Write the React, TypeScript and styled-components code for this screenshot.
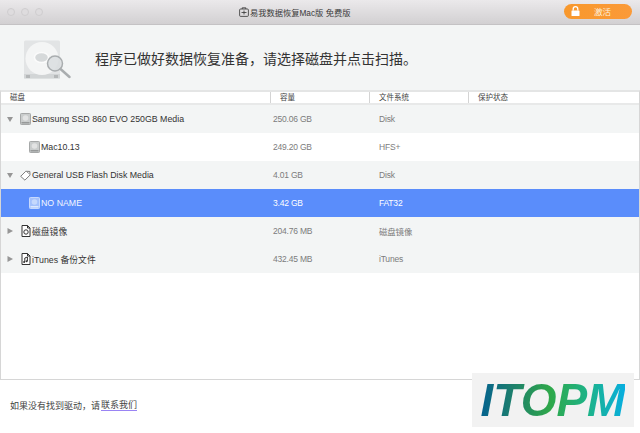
import { FC, ReactNode } from "react";
import styled, { createGlobalStyle } from "styled-components";

const GlobalStyle = createGlobalStyle`
	html, body {
		margin: 0;
		padding: 0;
		background: #ffffff;
	}
	body {
		font-family: "Liberation Sans", "Noto Sans CJK SC", sans-serif;
		color: #333333;
	}
`;

const Page = styled.div`
	position: relative;
	width: 640px;
	height: 433px;
	display: flex;
	flex-direction: column;
	overflow: hidden;
	background: #ffffff;
`;

const TitleBar = styled.div`
	height: 25px;
	flex: none;
	display: flex;
	align-items: center;
	padding: 0 8px 0 7px;
	background: linear-gradient(#ebe9eb, #d2d0d2);
	border-bottom: 1px solid #c4c2c4;
	box-sizing: border-box;
`;

const Lights = styled.div`
	display: flex;
	gap: 6px;
	width: 232px;
`;

const Light = styled.span`
	width: 8px;
	height: 8px;
	box-sizing: border-box;
	border-radius: 50%;
	background: #dedcde;
	border: 1px solid #cfcdcf;
`;

const Title = styled.div`
	flex: 1;
	display: flex;
	align-items: center;
	gap: 1px;
	font-size: 8.25px;
	color: #3a3a3a;
	white-space: nowrap;
`;

const ActivateButton = styled.div`
	width: 68px;
	height: 15px;
	border-radius: 8px;
	display: flex;
	align-items: center;
	background: linear-gradient(90deg, #f8982c, #fb9a38);
	color: #fdf0dc;
	font-size: 8.5px;
	padding-left: 7px;
	box-sizing: border-box;
	gap: 14px;
	margin-bottom: 2px;
`;

const Banner = styled.div`
	height: 65px;
	flex: none;
	display: flex;
	align-items: center;
	background: #f3f5f5;
	padding-left: 21px;
	box-sizing: border-box;
`;

const BannerText = styled.div`
	margin-left: 24px;
	font-size: 14px;
	color: #333333;
`;

const Table = styled.div`
	flex: none;
	height: 290px;
	display: flex;
	flex-direction: column;
	box-sizing: border-box;
	border: 1px solid #d6d6d6;
	border-top: 2px solid #e4e5e5;
`;

const columns = "269px 99px 99px 1fr";

const HeaderRow = styled.div`
	height: 11px;
	flex: none;
	display: grid;
	grid-template-columns: ${columns};
	background: #ffffff;
	border-bottom: 2px solid #e8e9e9;
`;

const HeaderCell = styled.div<{ $first?: boolean }>`
	font-size: 7.5px;
	line-height: 11px;
	color: #444444;
	padding-left: 9px;
	border-left: ${({ $first }) => ($first ? "none" : "1px solid #d4d4d4")};
	box-sizing: border-box;
`;

const Row = styled.div<{ $tone: "grey" | "white" | "selected" }>`
	height: 28px;
	flex: none;
	display: grid;
	grid-template-columns: ${columns};
	align-items: center;
	font-size: 8.5px;
	letter-spacing: -0.2px;
	background: ${({ $tone }) =>
		$tone === "selected" ? "#5a8dfb" : $tone === "grey" ? "#f3f5f5" : "#ffffff"};
	color: ${({ $tone }) => ($tone === "selected" ? "#ffffff" : "#7c7c7c")};
`;

const NameCell = styled.div<{ $child?: boolean; $selected?: boolean }>`
	display: flex;
	align-items: center;
	font-size: 8.8px;
	letter-spacing: 0;
	padding-left: ${({ $child }) => ($child ? "28px" : "6px")};
	color: ${({ $selected }) => ($selected ? "#f2f6ff" : "#333333")};
	white-space: nowrap;
`;

const Arrow = styled.svg`
	width: 6px;
	height: 6px;
	margin-right: 7px;
	flex: none;
`;

const IconSlot = styled.span`
	width: 11px;
	height: 13px;
	margin-right: 1px;
	display: flex;
	align-items: center;
	justify-content: center;
	flex: none;
`;

const SizeCell = styled.div`
	padding-left: 3px;
	white-space: nowrap;
`;

const SystemCell = styled.div`
	padding-left: 10px;
	white-space: nowrap;
`;

const Footer = styled.div`
	flex: 1;
	display: flex;
	align-items: center;
	padding: 0 0 2px 10px;
	font-size: 9px;
	color: #444444;
	background: #ffffff;
`;

const ContactLink = styled.span`
	margin-left: 1px;
	border-bottom: 1px solid #9a84f4;
	line-height: 10px;
`;

const Watermark = styled.div`
	position: absolute;
	left: 472px;
	top: 373px;
	width: 162px;
	height: 54px;
	display: flex;
	align-items: center;
	justify-content: center;
	background: #f2f2f2;
`;

const WatermarkText = styled.span`
	font-family: "Liberation Sans", sans-serif;
	font-size: 46px;
	font-weight: 700;
	font-style: italic;
	line-height: 54px;
	background: linear-gradient(90deg, #04628f 0%, #1d7f6c 22%, #2fa84a 48%, #1db38a 75%, #07aee0 100%);
	-webkit-background-clip: text;
	background-clip: text;
	color: transparent;
`;

const ExpandArrow: FC<{ open?: boolean }> = ({ open }) => (
	<Arrow viewBox="0 0 6 6">
		<path d={open ? "M0 1h6L3 6z" : "M.5 0L6 3 .5 6z"} fill="#969696" />
	</Arrow>
);

const DriveIcon: FC<{ selected?: boolean }> = ({ selected }) => (
	<svg width="11" height="12" viewBox="0 0 11 12">
		<rect x="0.5" y="0.5" width="10" height="11" rx="0.8" fill={selected ? "#a4c1fc" : "#c9cccc"} stroke={selected ? "#c7d9fd" : "#a6a8a8"} />
		<circle cx="5.5" cy="5" r="2.8" fill={selected ? "#c5d8fd" : "#e2e3e3"} />
		<rect x="1.5" y="9" width="8" height="1.5" fill={selected ? "#dce8fe" : "#979999"} />
	</svg>
);

const UsbIcon = () => (
	<svg width="13" height="13" viewBox="0 0 13 13">
		<path d="M.8 7.5L6.8 1.5l4.8.2.2 4.3-6 6z" fill="#fff" stroke="#555" strokeWidth="0.9" strokeLinejoin="round" />
		<path d="M8.6 2.4l2 2" stroke="#555" strokeWidth="0.9" />
	</svg>
);

const FileIcon: FC<{ note?: boolean }> = ({ note }) => (
	<svg width="10" height="12" viewBox="0 0 10 12">
		<path d="M1 .5h5.5L9 3v8.5H1z" fill="#fff" stroke="#333" />
		<path d="M6.5 .5V3H9" fill="none" stroke="#333" />
		{note ? (
			<>
				<path d="M3.8 9V5l2.6-1v4" fill="none" stroke="#333" />
				<circle cx="3.1" cy="9" r="1" fill="#333" />
				<circle cx="5.7" cy="8.2" r="1" fill="#333" />
			</>
		) : (
			<circle cx="5" cy="7" r="2.2" fill="none" stroke="#333" />
		)}
	</svg>
);

const BannerDisk = () => (
	<svg width="50" height="50" viewBox="0 0 50 50">
		<rect x="3" y="7.5" width="36" height="38" rx="1.5" fill="#e2e4e5" />
		<rect x="3" y="41" width="36" height="4.5" fill="#d2d5d6" />
		<rect x="5" y="42" width="4" height="3" fill="#b4b7b8" />
		<rect x="33" y="42" width="4" height="3" fill="#b4b7b8" />
		<rect x="15" y="10.5" width="11" height="3.5" fill="#bcbfc0" />
		<circle cx="21" cy="25.5" r="16.5" fill="#f4f5f5" />
		<ellipse cx="20.5" cy="24.5" rx="7" ry="5" fill="#d6d9da" stroke="#fbfbfb" strokeWidth="1.5" />
		<circle cx="34" cy="30.5" r="7.5" fill="#d9dddf" fillOpacity="0.85" stroke="#a9adaf" strokeWidth="1.5" />
		<path d="M39.5 36l9 8" stroke="#a9adaf" strokeWidth="2.4" strokeLinecap="round" />
	</svg>
);

const LockIcon = () => (
	<svg width="9" height="10" viewBox="0 0 9 10">
		<path d="M2.2 4.5V3a2.3 2.3 0 0 1 4.6 0v1.5" fill="none" stroke="#fff" strokeWidth="1.3" />
		<rect x="0.5" y="4.5" width="8" height="5.5" rx="0.6" fill="#fff" />
	</svg>
);

const TitleIcon = () => (
	<svg width="10" height="10" viewBox="0 0 10 10">
		<path d="M3.2 2V.8h3.6V2" fill="none" stroke="#333" strokeWidth="0.8" />
		<rect x="0.6" y="2" width="8.8" height="7.4" rx="1" fill="none" stroke="#333" strokeWidth="0.8" />
		<path d="M2.5 5.5h5M5 3.5v4" stroke="#333" strokeWidth="0.8" />
	</svg>
);

interface IDiskRow {
	tone: "grey" | "white" | "selected";
	name: string;
	size: string;
	fs: string;
	icon: ReactNode;
	open?: boolean;
	child?: boolean;
}

const rows: IDiskRow[] = [
	{ tone: "grey", name: "Samsung SSD 860 EVO 250GB Media", size: "250.06 GB", fs: "Disk", icon: <DriveIcon />, open: true },
	{ tone: "white", name: "Mac10.13", size: "249.20 GB", fs: "HFS+", icon: <DriveIcon />, child: true },
	{ tone: "grey", name: "General USB Flash Disk Media", size: "4.01 GB", fs: "Disk", icon: <UsbIcon />, open: true },
	{ tone: "selected", name: "NO NAME", size: "3.42 GB", fs: "FAT32", icon: <DriveIcon selected />, child: true },
	{ tone: "grey", name: "磁盘镜像", size: "204.76 MB", fs: "磁盘镜像", icon: <FileIcon /> },
	{ tone: "grey", name: "iTunes 备份文件", size: "432.45 MB", fs: "iTunes", icon: <FileIcon note /> },
];

export default function App() {
	return (
		<Page>
			<GlobalStyle />
			<TitleBar>
				<Lights>
					<Light />
					<Light />
					<Light />
				</Lights>
				<Title>
					<TitleIcon />
					易我数据恢复Mac版 免费版
				</Title>
				<ActivateButton>
					<LockIcon />
					激活
				</ActivateButton>
			</TitleBar>
			<Banner>
				<BannerDisk />
				<BannerText>程序已做好数据恢复准备，请选择磁盘并点击扫描。</BannerText>
			</Banner>
			<Table>
				<HeaderRow>
					<HeaderCell $first>磁盘</HeaderCell>
					<HeaderCell>容量</HeaderCell>
					<HeaderCell>文件系统</HeaderCell>
					<HeaderCell>保护状态</HeaderCell>
				</HeaderRow>
				{rows.map((row) => (
					<Row key={row.name} $tone={row.tone}>
						<NameCell $child={row.child} $selected={row.tone === "selected"}>
							{!row.child && <ExpandArrow open={row.open} />}
							<IconSlot>{row.icon}</IconSlot>
							{row.name}
						</NameCell>
						<SizeCell>{row.size}</SizeCell>
						<SystemCell>{row.fs}</SystemCell>
						<div />
					</Row>
				))}
			</Table>
			<Footer>
				如果没有找到驱动，请
				<ContactLink>联系我们</ContactLink>
			</Footer>
			<Watermark>
				<WatermarkText>ITOPM</WatermarkText>
			</Watermark>
		</Page>
	);
}
